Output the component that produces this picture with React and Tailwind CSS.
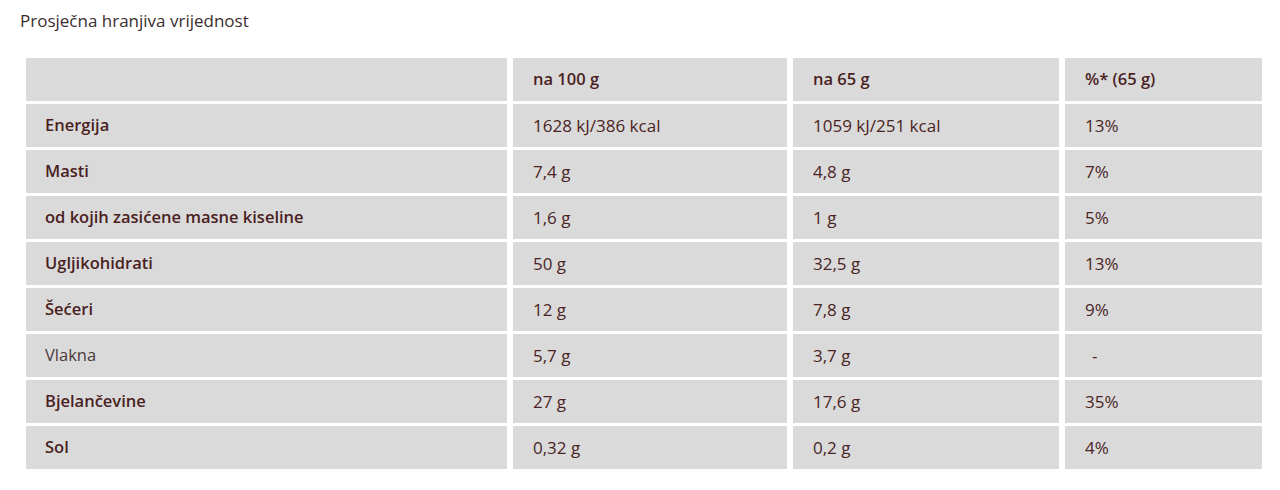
import React from "react";

const rows = [
  { name: "Energija", a: "1628 kJ/386 kcal", b: "1059 kJ/251 kcal", p: "13%", bold: true },
  { name: "Masti", a: "7,4 g", b: "4,8 g", p: "7%", bold: true },
  { name: "od kojih zasićene masne kiseline", a: "1,6 g", b: "1 g", p: "5%", bold: true },
  { name: "Ugljikohidrati", a: "50 g", b: "32,5 g", p: "13%", bold: true },
  { name: "Šećeri", a: "12 g", b: "7,8 g", p: "9%", bold: true },
  { name: "Vlakna", a: "5,7 g", b: "3,7 g", p: "-", bold: false },
  { name: "Bjelančevine", a: "27 g", b: "17,6 g", p: "35%", bold: true },
  { name: "Sol", a: "0,32 g", b: "0,2 g", p: "4%", bold: true },
];

export default function App() {
  return (
    <div className="bg-white min-h-[490px] pl-[20px] pr-[12px] pt-[8px] text-[#4a2424]" style={{ fontFamily: '"Open Sans", "Noto Sans", sans-serif' }}>
      <h2 className="text-[17px] font-normal text-[#3a2e2e] leading-[26px]">Prosječna hranjiva vrijednost</h2>
      <table className="w-full mt-[21px] border-separate border-spacing-x-[6px] border-spacing-y-[3px] text-[16.5px]">
        <thead>
          <tr className="h-[43px]">
            <th className="w-[481px] bg-[#dadada]"></th>
            <th className="w-[274px] bg-[#dadada] text-left font-semibold pl-[20px] text-[#4a1f1f]">na 100 g</th>
            <th className="w-[266px] bg-[#dadada] text-left font-semibold pl-[20px] text-[#4a1f1f]">na 65 g</th>
            <th className="bg-[#dadada] text-left font-semibold pl-[20px] text-[#4a1f1f]">%* (65 g)</th>
          </tr>
        </thead>
        <tbody>
          {rows.map((r) => (
            <tr key={r.name} className="h-[43px]">
              <td className={`bg-[#dadada] pl-[19px] ${r.bold ? "font-semibold text-[#4a1f1f]" : "font-normal text-[#4a3a3a]"}`}>{r.name}</td>
              <td className="bg-[#dadada] pl-[20px] text-[17px]">{r.a}</td>
              <td className="bg-[#dadada] pl-[20px] text-[17px]">{r.b}</td>
              <td className={`bg-[#dadada] text-[17px] ${r.p === "-" ? "pl-[27px]" : "pl-[20px]"}`}>{r.p}</td>
            </tr>
          ))}
        </tbody>
      </table>
    </div>
  );
}
